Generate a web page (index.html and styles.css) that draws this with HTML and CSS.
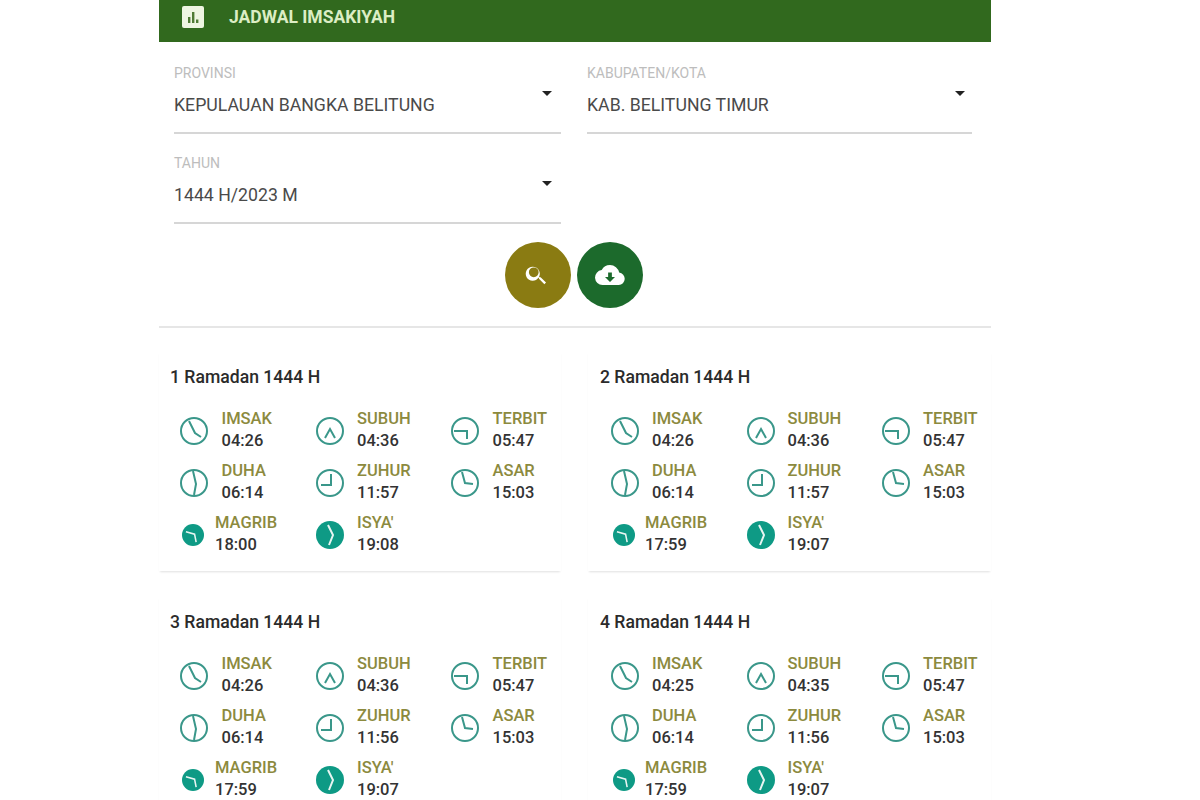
FILE: index.html
```html
<!DOCTYPE html>
<html lang="en">
<head>
  <meta charset="UTF-8">
  <meta name="viewport" content="width=device-width, initial-scale=1.0">
  <title>Jadwal Imsakiyah</title>
  <link rel="stylesheet" href="styles.css">
</head>
<body>
  <svg class="defs" width="0" height="0" aria-hidden="true">
    <symbol id="imsak" viewBox="0 0 28 28"><circle cx="14" cy="14" r="13"/><path d="M9 4 L15 16 L21 20"/></symbol>
    <symbol id="subuh" viewBox="0 0 28 28"><circle cx="14" cy="14" r="13"/><path d="M9 21 L14 12 L19 21"/></symbol>
    <symbol id="terbit" viewBox="0 0 28 28"><circle cx="14" cy="14" r="13"/><path d="M3 14 L16 14 L16 22"/></symbol>
    <symbol id="duha" viewBox="0 0 28 28"><circle cx="14" cy="14" r="13"/><path d="M13 2 L16 15 L14 26"/></symbol>
    <symbol id="zuhur" viewBox="0 0 28 28"><circle cx="14" cy="14" r="13"/><path d="M15 5 L15 16 L5 16"/></symbol>
    <symbol id="asar" viewBox="0 0 28 28"><circle cx="14" cy="14" r="13"/><path d="M11 3 L14 14 L22 15"/></symbol>
    <symbol id="magrib" viewBox="0 0 28 28"><circle class="fill" cx="14" cy="14" r="14"/><path class="hand" d="M5 10 L16 13 L18 23"/></symbol>
    <symbol id="isya" viewBox="0 0 28 28"><circle class="fill" cx="14" cy="14" r="14"/><path class="hand" d="M12 4 L17 14 L13 24"/></symbol>
  </svg>

  <div class="panel">
    <header class="topbar">
      <svg class="topbar-icon" viewBox="0 0 22 22"><rect width="22" height="22" rx="2" fill="#eef5e2"/><path d="M6 11h2.4v6H6zM10 6h2.4v11H10zM14 13.5h2.4V17H14z" fill="#4f7a35"/></svg>
      <h1>JADWAL IMSAKIYAH</h1>
    </header>

    <section class="filters">
      <div class="field">
        <label>PROVINSI</label>
        <div class="value">KEPULAUAN BANGKA BELITUNG</div>
      </div>
      <div class="field field-right">
        <label>KABUPATEN/KOTA</label>
        <div class="value">KAB. BELITUNG TIMUR</div>
      </div>
      <div class="field">
        <label>TAHUN</label>
        <div class="value">1444 H/2023 M</div>
      </div>
    </section>

    <div class="actions">
      <button class="fab fab-search" aria-label="Cari">
        <svg viewBox="1.4 0 24 24" width="26" height="26"><path fill="#fff" d="M15.5 14h-.8l-.3-.3A6.5 6.5 0 1 0 14 14.4l.3.3v.8l5 5 1.5-1.5-5-5zm-6 0a4.5 4.5 0 1 1 0-9 4.5 4.5 0 0 1 0 9z"/></svg>
      </button>
      <button class="fab fab-download" aria-label="Unduh">
        <svg viewBox="0 0 24 24" width="30" height="30"><path fill="#fff" d="M19.35 10.04A7.49 7.49 0 0 0 12 4a7.5 7.5 0 0 0-6.65 4.04A6 6 0 0 0 6 20h13a5 5 0 0 0 .35-9.96zM16 13.5l-4 4-4-4h2.5V10h3v3.5H16z"/></svg>
      </button>
    </div>

    <section class="cards">
      <article class="card">
        <h2>1 Ramadan 1444 H</h2>
        <div class="times">
          <div class="time"><svg class="clock"><use href="#imsak"/></svg><div><b>IMSAK</b><span>04:26</span></div></div>
          <div class="time"><svg class="clock"><use href="#subuh"/></svg><div><b>SUBUH</b><span>04:36</span></div></div>
          <div class="time"><svg class="clock"><use href="#terbit"/></svg><div><b>TERBIT</b><span>05:47</span></div></div>
          <div class="time"><svg class="clock"><use href="#duha"/></svg><div><b>DUHA</b><span>06:14</span></div></div>
          <div class="time"><svg class="clock"><use href="#zuhur"/></svg><div><b>ZUHUR</b><span>11:57</span></div></div>
          <div class="time"><svg class="clock"><use href="#asar"/></svg><div><b>ASAR</b><span>15:03</span></div></div>
          <div class="time time-small"><svg class="clock"><use href="#magrib"/></svg><div><b>MAGRIB</b><span>18:00</span></div></div>
          <div class="time"><svg class="clock"><use href="#isya"/></svg><div><b>ISYA'</b><span>19:08</span></div></div>
        </div>
      </article>

      <article class="card">
        <h2>2 Ramadan 1444 H</h2>
        <div class="times">
          <div class="time"><svg class="clock"><use href="#imsak"/></svg><div><b>IMSAK</b><span>04:26</span></div></div>
          <div class="time"><svg class="clock"><use href="#subuh"/></svg><div><b>SUBUH</b><span>04:36</span></div></div>
          <div class="time"><svg class="clock"><use href="#terbit"/></svg><div><b>TERBIT</b><span>05:47</span></div></div>
          <div class="time"><svg class="clock"><use href="#duha"/></svg><div><b>DUHA</b><span>06:14</span></div></div>
          <div class="time"><svg class="clock"><use href="#zuhur"/></svg><div><b>ZUHUR</b><span>11:57</span></div></div>
          <div class="time"><svg class="clock"><use href="#asar"/></svg><div><b>ASAR</b><span>15:03</span></div></div>
          <div class="time time-small"><svg class="clock"><use href="#magrib"/></svg><div><b>MAGRIB</b><span>17:59</span></div></div>
          <div class="time"><svg class="clock"><use href="#isya"/></svg><div><b>ISYA'</b><span>19:07</span></div></div>
        </div>
      </article>

      <article class="card">
        <h2>3 Ramadan 1444 H</h2>
        <div class="times">
          <div class="time"><svg class="clock"><use href="#imsak"/></svg><div><b>IMSAK</b><span>04:26</span></div></div>
          <div class="time"><svg class="clock"><use href="#subuh"/></svg><div><b>SUBUH</b><span>04:36</span></div></div>
          <div class="time"><svg class="clock"><use href="#terbit"/></svg><div><b>TERBIT</b><span>05:47</span></div></div>
          <div class="time"><svg class="clock"><use href="#duha"/></svg><div><b>DUHA</b><span>06:14</span></div></div>
          <div class="time"><svg class="clock"><use href="#zuhur"/></svg><div><b>ZUHUR</b><span>11:56</span></div></div>
          <div class="time"><svg class="clock"><use href="#asar"/></svg><div><b>ASAR</b><span>15:03</span></div></div>
          <div class="time time-small"><svg class="clock"><use href="#magrib"/></svg><div><b>MAGRIB</b><span>17:59</span></div></div>
          <div class="time"><svg class="clock"><use href="#isya"/></svg><div><b>ISYA'</b><span>19:07</span></div></div>
        </div>
      </article>

      <article class="card">
        <h2>4 Ramadan 1444 H</h2>
        <div class="times">
          <div class="time"><svg class="clock"><use href="#imsak"/></svg><div><b>IMSAK</b><span>04:25</span></div></div>
          <div class="time"><svg class="clock"><use href="#subuh"/></svg><div><b>SUBUH</b><span>04:35</span></div></div>
          <div class="time"><svg class="clock"><use href="#terbit"/></svg><div><b>TERBIT</b><span>05:47</span></div></div>
          <div class="time"><svg class="clock"><use href="#duha"/></svg><div><b>DUHA</b><span>06:14</span></div></div>
          <div class="time"><svg class="clock"><use href="#zuhur"/></svg><div><b>ZUHUR</b><span>11:56</span></div></div>
          <div class="time"><svg class="clock"><use href="#asar"/></svg><div><b>ASAR</b><span>15:03</span></div></div>
          <div class="time time-small"><svg class="clock"><use href="#magrib"/></svg><div><b>MAGRIB</b><span>17:59</span></div></div>
          <div class="time"><svg class="clock"><use href="#isya"/></svg><div><b>ISYA'</b><span>19:07</span></div></div>
        </div>
      </article>
    </section>
  </div>
</body>
</html>
```

FILE: styles.css
```css
html, body {
  height: 800px;
  overflow: hidden;
}

body {
  margin: 0;
  background: #fff;
  font-family: 'Roboto', sans-serif;
  color: #333;
}

.defs {
  position: absolute;
}

.panel {
  width: 832px;
  margin-left: 159px;
}

.topbar {
  display: flex;
  align-items: center;
  height: 42px;
  padding: 0 23px;
  box-sizing: border-box;
  background: #31691e;
}

.topbar-icon {
  width: 22px;
  height: 22px;
  margin-top: -8px;
}

.topbar h1 {
  margin: -8px 0 0 25px;
  font-size: 17.5px;
  font-weight: 700;
  color: #dcedc4;
}

.filters {
  display: grid;
  grid-template-columns: 387px 385px;
  column-gap: 26px;
  row-gap: 22px;
  padding: 24px 19px 0 15px;
}

.field {
  position: relative;
  height: 68px;
  box-sizing: border-box;
  border-bottom: 2px solid #d6d6d6;
}

.field::after {
  content: "";
  position: absolute;
  top: 25px;
  right: 9px;
  border-left: 5px solid transparent;
  border-right: 5px solid transparent;
  border-top: 5px solid #222;
}

.field-right::after {
  right: 7px;
}

.field label {
  display: block;
  font-size: 14px;
  line-height: 14px;
  color: #bdbdbd;
}

.value {
  margin-top: 14px;
  font-size: 17.7px;
  line-height: 23px;
  color: #4a4a4a;
}

.actions {
  display: flex;
  justify-content: center;
  gap: 6px;
  padding: 18px 2px 18px 0;
  border-bottom: 2px solid #e6e6e6;
}

.fab {
  display: flex;
  align-items: center;
  justify-content: center;
  width: 66px;
  height: 66px;
  padding: 0;
  border: none;
  border-radius: 50%;
}

.fab-search {
  background: #8a7b12;
}

.fab-download {
  background: #1c6a2c;
}

.cards {
  display: grid;
  grid-template-columns: 402px 403px;
  column-gap: 27px;
  row-gap: 25px;
  padding-top: 23px;
}

.card {
  height: 220px;
  box-sizing: border-box;
  padding: 17px 0 0 11px;
  box-shadow: 0 2px 2px -1px rgba(0, 0, 0, 0.12);
}

.card:nth-child(even) {
  padding-left: 12px;
}

.card h2 {
  margin: 0 0 22px;
  font-size: 17.6px;
  line-height: 18px;
  font-weight: 500;
  color: #2b2b2b;
}

.times {
  display: grid;
  grid-template-columns: repeat(3, 135.5px);
  row-gap: 8px;
  margin-left: 10px;
}

.card:nth-child(even) .times {
  margin-left: 11px;
}

.time {
  display: flex;
  align-items: center;
  gap: 13.5px;
  height: 44px;
}

.card:nth-child(even) .time {
  gap: 13px;
}

.clock {
  flex: none;
  width: 28px;
  height: 28px;
  margin-top: 2px;
  fill: none;
  stroke: #3a978a;
  stroke-width: 2;
}

.fill {
  fill: #0e9a85;
  stroke: none;
}

.hand {
  stroke: #e8f5f2;
}

.time-small {
  gap: 11px;
}

.card:nth-child(even) .time-small {
  gap: 10px;
}

.time-small .clock {
  width: 22px;
  height: 22px;
  margin-left: 2px;
}

.time b {
  display: block;
  font-size: 16.5px;
  line-height: 20px;
  font-weight: 500;
  color: #8c8a3e;
}

.time span {
  display: block;
  margin-top: 1px;
  font-size: 16.5px;
  line-height: 22px;
  font-weight: 500;
  color: #333;
}
```
